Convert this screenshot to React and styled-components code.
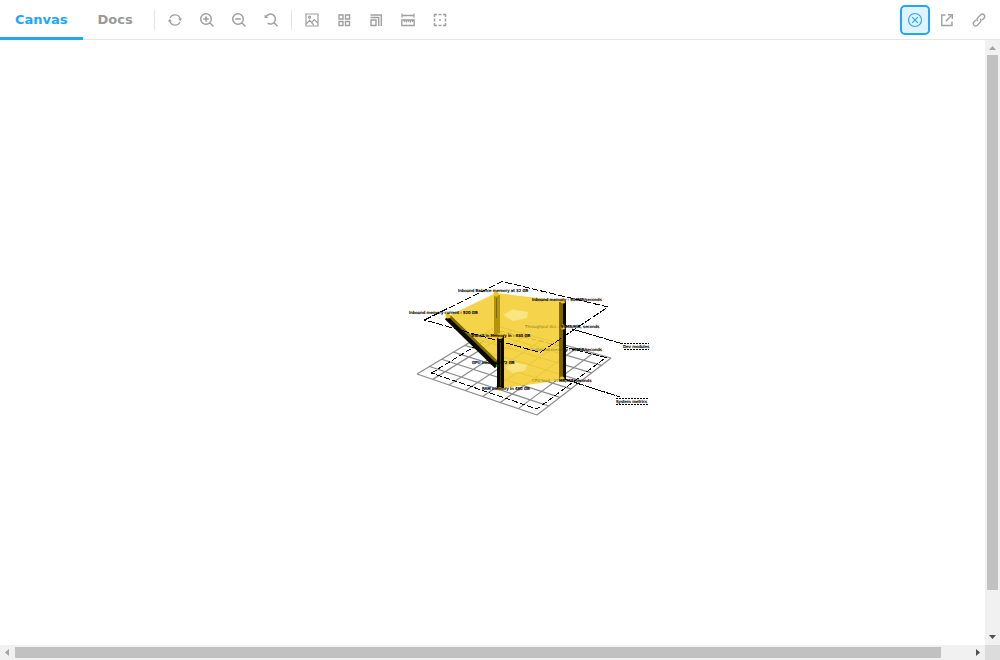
import React, { useState } from "react";
import styled, { createGlobalStyle, css } from "styled-components";

const GlobalStyle = createGlobalStyle`
  * { box-sizing: border-box; }
  html, body { margin: 0; padding: 0; }
  body {
    font-family: "DejaVu Sans", Verdana, sans-serif;
    background: #ffffff;
    overflow: hidden;
  }
`;

const Page = styled.div`
  display: flex;
  flex-direction: column;
  height: 100vh;
`;

const Toolbar = styled.header`
  display: flex;
  justify-content: space-between;
  flex: none;
  height: 40px;
  box-shadow: inset 0 -1px 0 #e5e5e5;
`;

const Group = styled.div`
  display: flex;
  align-items: center;
  gap: 4px;
  padding-right: ${(p) => (p.$end ? "7px" : "0")};
`;

const Tabs = styled.nav`
  display: flex;
  align-self: stretch;
`;

const Tab = styled.button`
  height: 40px;
  padding: 1px 15px 0;
  border: 0;
  border-bottom: 3px solid ${(p) => (p.$active ? "#1ea7fd" : "transparent")};
  background: transparent;
  color: ${(p) => (p.$active ? "#1ea7fd" : "#999999")};
  font: bold 13px/13px "DejaVu Sans", Verdana, sans-serif;
  cursor: pointer;
`;

const Separator = styled.span`
  width: 1px;
  height: 20px;
  margin: 0 2px;
  background: #e5e5e5;
`;

const IconButton = styled.button`
  display: flex;
  align-items: center;
  justify-content: center;
  width: 28px;
  height: 28px;
  padding: 0;
  border: 0;
  border-radius: 4px;
  background: transparent;
  color: #a0a0a0;
  cursor: pointer;

  ${(p) =>
    p.$active &&
    css`
      background: #e0f3ff;
      color: #1ea7fd;
      outline: 2px solid #1ea7fd;
      outline-offset: -1px;
    `}
`;

const Icon = styled.svg`
  width: 14px;
  height: 14px;
  fill: none;
  stroke: currentColor;
  stroke-width: 1.2;
  overflow: visible;
`;

const Viewport = styled.main`
  display: grid;
  flex: 1;
  min-height: 0;
  grid-template-columns: minmax(0, 1fr) 15px;
  grid-template-rows: minmax(0, 1fr) 15px;
`;

const Stage = styled.section`
  display: flex;
  align-items: center;
  justify-content: center;
  padding: 11px 0 0 75px;
  overflow: hidden;
`;

const Diagram = styled.svg`
  width: 250px;
  height: 144px;
  flex: none;
`;

const Track = styled.div`
  display: flex;
  flex-direction: ${(p) => (p.$vertical ? "column" : "row")};
  background: #f1f1f1;
`;

const Rail = styled.div`
  display: flex;
  flex: 1;
  flex-direction: ${(p) => (p.$vertical ? "column" : "row")};
  padding: ${(p) => (p.$vertical ? "0 2px" : "2px 0")};
`;

const Thumb = styled.div`
  flex: 0 0 ${(p) => p.$size};
  background: #c1c1c1;
`;

const Arrow = styled.svg`
  width: 15px;
  height: 15px;
  flex: none;
  fill: ${(p) => (p.$dim ? "#a3a3a3" : "#505050")};
`;

const Corner = styled.div`
  background: #dcdcdc;
`;

const icons = {
  sync: (
    <>
      <path d="M1.9 5A5.6 5.6 0 0 1 12.3 6M12.1 9A5.6 5.6 0 0 1 1.7 8" />
      <path d="M10 5.500 14.200 5.500 12.300 8.300ZM-.2 8.500 4 8.500 1.700 5.700Z" fill="currentColor" stroke="none" />
    </>
  ),
  zoomIn: <path d="M9.8 9.8 13.5 13.5M6 3.2V8.8M3.2 6H8.8M11.3 6A5.3 5.3 0 1 1 .7 6A5.3 5.3 0 0 1 11.3 6Z" strokeWidth="1.5" />,
  zoomOut: <path d="M9.8 9.8 13.5 13.5M3.2 6H8.8M11.3 6A5.3 5.3 0 1 1 .7 6A5.3 5.3 0 0 1 11.3 6Z" strokeWidth="1.5" />,
  zoomReset: (
    <>
      <path d="M2.2 3.500A5 5 0 1 1 3.600 10.200M10.200 9.800 13.500 13.300" strokeWidth="1.5" />
      <path d="M.6 1.500V5.100H4.300Z" fill="currentColor" stroke="none" />
    </>
  ),
  photo: (
    <>
      <path d="M1 1H13V13H1ZM1.3 10.8 4.6 7.4 8.8 12M6.7 9.3 9.4 6.5 12.7 10" />
      <circle cx="4.6" cy="4.2" r="1" />
    </>
  ),
  grid: <path d="M2 2H6V6H2ZM8.500 2H12.500V6H8.500ZM2 8.500H6V12.500H2ZM8.500 8.500H12.500V12.500H8.500Z" strokeWidth="1.4" />,
  grow: <path d="M2 7H7V12.500H2ZM1.500 4.500H9.700V13M1.500 2H12.300V13" strokeWidth="1.4" />,
  ruler: <path d="M1 2.5H13M1 .5V4.5M13 .5V4.5M.8 7H13.2V12.5H.8ZM3.5 7V9M5.5 7V9.5M7.5 7V9M9.5 7V9.5M11.5 7V9" strokeWidth="1.3" />,
  outline: (
    <>
      <path d="M1.5 4V1.5H4M5.5 1.5H8.5M10 1.5H12.5V4M12.5 5.5V8.5M12.5 10V12.5H10M8.5 12.5H5.5M4 12.5H1.5V10M1.5 8.5V5.5" strokeWidth="1.5" />
      <circle cx="7" cy="7" r="1" fill="currentColor" stroke="none" />
    </>
  ),
  close: <path d="M4.2 4.2 9.8 9.8M9.8 4.2 4.2 9.8M13.5 7A6.5 6.5 0 1 1 .5 7A6.5 6.5 0 0 1 13.5 7Z" strokeWidth="1.1" />,
  share: (
    <>
      <path d="M5.5 2H1.8V12.5H12V8.5M5.8 8.2 11.5 2.5" strokeWidth="1.4" />
      <path d="M8 1.7H12.3V6" strokeWidth="1.4" />
    </>
  ),
  link: (
    <path
      d="M5.8 8.3C4.6 7 4.8 5.7 5.8 4.7L8.7 1.8C11 -.2 14 2.7 12.2 5L10.2 7M8.2 5.7C9.4 7 9.2 8.3 8.2 9.3L5.3 12.2C3 14.2 0 11.3 1.8 9L3.8 7"
      strokeWidth="1.3"
    />
  ),
};

function Tool({ name, label, active, onClick }) {
  return (
    <IconButton type="button" aria-label={label} title={label} $active={active} onClick={onClick}>
      <Icon viewBox="0 0 14 14" aria-hidden="true">{icons[name]}</Icon>
    </IconButton>
  );
}

const viewTools = [
  ["sync", "Remount component"],
  ["zoomIn", "Zoom in"],
  ["zoomOut", "Zoom out"],
  ["zoomReset", "Reset zoom"],
];

const canvasTools = [
  ["photo", "Change the background"],
  ["grid", "Apply a grid"],
  ["grow", "Change the viewport size"],
  ["ruler", "Enable measure"],
  ["outline", "Apply outlines"],
];

// Corners of the floor plane: left, bottom, right, back.
const floor = [
  [417, 374],
  [537, 415],
  [611, 358],
  [497, 326],
];

const CELLS = 7;

// Maps the unit square on to the floor, keeping its perspective.
function project(u, v) {
  const [a, b, c, d] = floor;
  const sx = a[0] - b[0] + c[0] - d[0];
  const sy = a[1] - b[1] + c[1] - d[1];
  const dx1 = b[0] - c[0];
  const dx2 = d[0] - c[0];
  const dy1 = b[1] - c[1];
  const dy2 = d[1] - c[1];
  const det = dx1 * dy2 - dx2 * dy1;
  const g = (sx * dy2 - dx2 * sy) / det;
  const h = (dx1 * sy - sx * dy1) / det;
  const w = g * u + h * v + 1;
  const x = (b[0] - a[0] + g * b[0]) * u + (d[0] - a[0] + h * d[0]) * v + a[0];
  const y = (b[1] - a[1] + g * b[1]) * u + (d[1] - a[1] + h * d[1]) * v + a[1];
  return `${x / w} ${y / w}`;
}

const gridPath = Array.from({ length: CELLS + 1 }, (_, i) => {
  const t = i / CELLS;
  return `M${project(t, 0)}L${project(t, 1)}M${project(0, t)}L${project(1, t)}`;
}).join("");

// Position, the part seen through the faces, and the part in front.
const labels = [
  [458, 292, "", "Inbound Balance memory at 32 GB"],
  [409, 314, "", "Inbound memory current : 520 GB"],
  [532, 301, "", "Inbound memory : 504MB/seconds"],
  [525, 328, "Throughput ALL : ", "99MB/MiB, seconds"],
  [471, 337, "", "Transit in Memory in : 430 GB"],
  [530, 351, "Outbound memo", "ry : 99MiB/seconds"],
  [472, 364, "", "GPU memory : 72 GB"],
  [532, 382, "CPU load : 22", "MB/MiB/seconds"],
  [482, 390, "", "RAM memory in 480 GB"],
  [623, 348, "", "Dev modules"],
  [616, 403, "", "System metrics"],
];

function Scene() {
  return (
    <Diagram viewBox="405 276 250 144" role="img" aria-label="Metrics model">
      <path d={gridPath} fill="none" stroke="#8c8c8c" strokeWidth="1.2" />
      <g fill="none" stroke="#000" strokeWidth="1" strokeDasharray="6 2" shapeRendering="crispEdges">
        <path d="M431.5 373 500 331 606 357.5 537 409Z" />
      </g>
      <g fill="none" stroke="#000" strokeWidth="1" strokeDasharray="10 1" shapeRendering="crispEdges">
        <path d="M572 329 623 344M564 379 620 397" />
      </g>
      <path d="M448 316 496 293 565 301 563 380 504 388 497 388 497 365Z" fill="#f4cf36" fillOpacity="0.9" />
      <path d="M503 315 512 309.5 528 312 527 318 513 321Z M505 368 513 362 528 365 524 371 513 373Z" fill="#fff3b0" fillOpacity="0.55" />

      <path d="M494 295H500V336H494Z" fill="#b39508" />
      <path d="M496.5 298V318" stroke="#806800" />
      <path d="M447 317 497 366" stroke="#0b0b00" strokeWidth="6" />
      <path d="M450 316.500 497 362" stroke="#806a00" strokeWidth="2.500" />
      <path d="M559 302H563V379H559Z" fill="#7d6500" />
      <path d="M563 301H566V379H563Z" fill="#050500" />
      <path d="M497 336H504V388H497Z" fill="#080800" />
      <path d="M500.5 340V386" stroke="#4a3e00" />
      <path d="M496.5 364V367" stroke="#1d9b36" />

      <path
        d="M424.5 320 502 281.5 608 307 540 352.5Z"
        fill="none"
        stroke="#000"
        strokeWidth="1"
        strokeDasharray="7 2"
        shapeRendering="crispEdges"
      />
      <g fill="#f0c514">
        <circle cx="448" cy="316" r="2.5" />
        <circle cx="496" cy="294" r="2.5" />
        <circle cx="563" cy="301" r="2.5" />
        <circle cx="563" cy="327" r="2.5" />
        <circle cx="500" cy="336" r="3" />
        <circle cx="500" cy="389" r="2" />
        <circle cx="562" cy="379" r="2.5" />
      </g>

      <g fontFamily="DejaVu Sans, sans-serif" fontSize="4" stroke="#000" strokeWidth="0.2">
        {labels.map(([x, y, behind, front]) => (
          <text key={y} x={x} y={y}>
            <tspan opacity="0.6" fill="#4a3e00" stroke="none">{behind}</tspan>
            {front}
          </text>
        ))}
      </g>
      <path
        d="M624 343.5H649M624 349.5H649M616 398.5H649M616 404.5H649"
        stroke="#000"
        strokeDasharray="2 1"
      />
    </Diagram>
  );
}

export default function App() {
  const [tab, setTab] = useState("Canvas");
  return (
    <>
      <GlobalStyle />
      <Page>
        <Toolbar>
          <Group>
            <Tabs>
              {["Canvas", "Docs"].map((name) => (
                <Tab key={name} type="button" $active={tab === name} onClick={() => setTab(name)}>
                  {name}
                </Tab>
              ))}
            </Tabs>
            <Separator />
            {viewTools.map(([name, label]) => (
              <Tool key={name} name={name} label={label} />
            ))}
            <Separator />
            {canvasTools.map(([name, label]) => (
              <Tool key={name} name={name} label={label} />
            ))}
          </Group>
          <Group $end>
            <Tool name="close" label="Exit full screen" active />
            <Tool name="share" label="Open canvas in new tab" />
            <Tool name="link" label="Copy canvas link" />
          </Group>
        </Toolbar>
        <Viewport>
          <Stage>
            <Scene />
          </Stage>
          <Track $vertical>
            <Arrow viewBox="0 0 15 15" $dim><path d="M4 10H11L7.5 6Z" /></Arrow>
            <Rail $vertical><Thumb $size="93%" /></Rail>
            <Arrow viewBox="0 0 15 15"><path d="M4 5H11L7.5 9Z" /></Arrow>
          </Track>
          <Track>
            <Arrow viewBox="0 0 15 15" $dim><path d="M9 4V11L5 7.5Z" /></Arrow>
            <Rail><Thumb $size="97%" /></Rail>
            <Arrow viewBox="0 0 15 15"><path d="M6 4V11L10 7.5Z" /></Arrow>
          </Track>
          <Corner />
        </Viewport>
      </Page>
    </>
  );
}
